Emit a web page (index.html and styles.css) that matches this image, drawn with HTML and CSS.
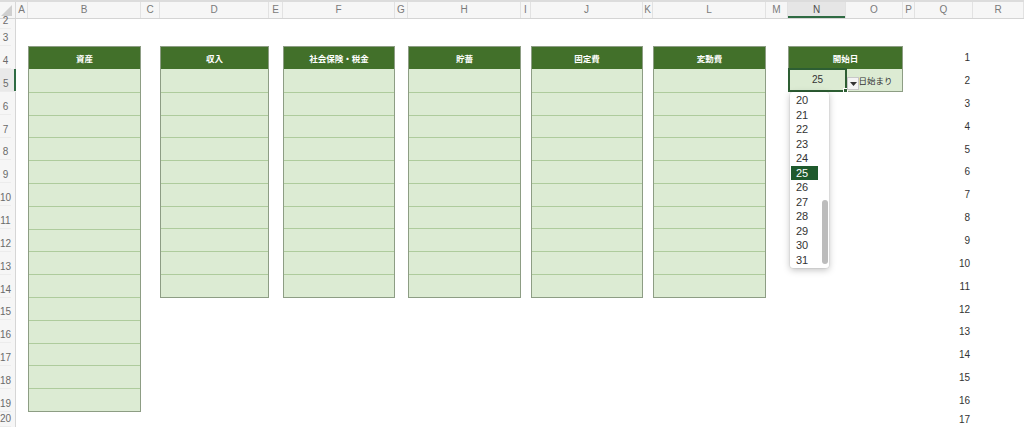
FILE: index.html
```html
<!DOCTYPE html>
<html lang="ja">
<head>
<meta charset="utf-8">
<title>Sheet</title>
<link rel="stylesheet" href="styles.css">
</head>
<body>
<div class="app">
  <div class="colhdr">
    <div class="corner"><svg width="12" height="13" viewBox="0 0 12 13"><polygon points="11,1 11,12 0,12" fill="#cfcfcf"/></svg></div>
    <div class="ch">A</div><div class="ch">B</div><div class="ch">C</div><div class="ch">D</div><div class="ch">E</div><div class="ch">F</div><div class="ch">G</div><div class="ch">H</div><div class="ch">I</div><div class="ch">J</div><div class="ch">K</div><div class="ch">L</div><div class="ch">M</div><div class="ch ch-sel">N</div><div class="ch">O</div><div class="ch">P</div><div class="ch">Q</div><div class="ch">R</div>
  </div>
  <div class="main">
    <div class="rowhdr">
      <div class="rh">2</div><div class="rh">3</div><div class="rh">4</div><div class="rh rh-sel">5</div><div class="rh">6</div><div class="rh">7</div><div class="rh">8</div><div class="rh">9</div><div class="rh">10</div><div class="rh">11</div><div class="rh">12</div><div class="rh">13</div><div class="rh">14</div><div class="rh">15</div><div class="rh">16</div><div class="rh">17</div><div class="rh">18</div><div class="rh">19</div><div class="rh">20</div>
    </div>
    <div class="sheet">
      <section class="tbl tbl-long col-b">
        <div class="th">資産</div>
        <div class="td"></div><div class="td"></div><div class="td"></div><div class="td"></div><div class="td"></div><div class="td"></div><div class="td"></div><div class="td"></div><div class="td"></div><div class="td"></div><div class="td"></div><div class="td"></div><div class="td"></div><div class="td"></div><div class="td"></div>
      </section>
      <section class="tbl tbl-short col-d">
        <div class="th">収入</div>
        <div class="td"></div><div class="td"></div><div class="td"></div><div class="td"></div><div class="td"></div><div class="td"></div><div class="td"></div><div class="td"></div><div class="td"></div><div class="td"></div>
      </section>
      <section class="tbl tbl-short col-f">
        <div class="th">社会保険・税金</div>
        <div class="td"></div><div class="td"></div><div class="td"></div><div class="td"></div><div class="td"></div><div class="td"></div><div class="td"></div><div class="td"></div><div class="td"></div><div class="td"></div>
      </section>
      <section class="tbl tbl-short col-h">
        <div class="th">貯蓄</div>
        <div class="td"></div><div class="td"></div><div class="td"></div><div class="td"></div><div class="td"></div><div class="td"></div><div class="td"></div><div class="td"></div><div class="td"></div><div class="td"></div>
      </section>
      <section class="tbl tbl-short col-j">
        <div class="th">固定費</div>
        <div class="td"></div><div class="td"></div><div class="td"></div><div class="td"></div><div class="td"></div><div class="td"></div><div class="td"></div><div class="td"></div><div class="td"></div><div class="td"></div>
      </section>
      <section class="tbl tbl-short col-l">
        <div class="th">変動費</div>
        <div class="td"></div><div class="td"></div><div class="td"></div><div class="td"></div><div class="td"></div><div class="td"></div><div class="td"></div><div class="td"></div><div class="td"></div><div class="td"></div>
      </section>
      <section class="start">
        <div class="th th-span">開始日</div>
        <div class="sc sc-sel">25
          <span class="handle"></span>
          <span class="ddbtn"><svg width="7" height="4" viewBox="0 0 7 4"><polygon points="0,0 7,0 3.5,4" fill="#333"/></svg></span>
          <div class="dropdown">
            <ul class="items">
              <li>20</li><li>21</li><li>22</li><li>23</li><li>24</li><li class="on">25</li><li>26</li><li>27</li><li>28</li><li>29</li><li>30</li><li>31</li>
            </ul>
            <div class="track"><div class="thumb"></div></div>
          </div>
        </div>
        <div class="sc sc-text">日始まり</div>
      </section>
      <div class="qnums">
        <span>1</span><span>2</span><span>3</span><span>4</span><span>5</span><span>6</span><span>7</span><span>8</span><span>9</span><span>10</span><span>11</span><span>12</span><span>13</span><span>14</span><span>15</span><span>16</span><span>17</span>
      </div>
    </div>
  </div>
</div>
</body>
</html>
```

FILE: styles.css
```css
* { box-sizing: border-box; margin: 0; padding: 0; }
html, body { width: 1024px; height: 427px; overflow: hidden; background: #fff; }
body { font-family: "Liberation Sans", Arial, "Noto Sans CJK JP", sans-serif; color: #333; }

.app { width: 1024px; height: 427px; display: flex; flex-direction: column; }

.colhdr {
  display: grid;
  grid-template-columns: 16px 12px 113px 19px 109px 14px 112px 13px 113px 10px 112px 10px 113px 22px 58px 57px 12px 58px 1fr;
  height: 19px;
  background: #f6f6f6;
  border-top: 2px solid #dcdcdc;
  border-bottom: 1px solid #d4d4d4;
}
.corner { display: flex; align-items: flex-end; justify-content: flex-end; padding: 0 2px 1px 0; border-right: 1px solid #d8d8d8; }
.corner svg { display: block; }
.ch {
  font-size: 10px; color: #7a7a7a; text-align: center; line-height: 16px;
  border-right: 1px solid #e2e2e2;
  overflow: hidden;
}
.ch-sel { background: #e6e6e6; box-shadow: inset 0 -2px 0 #2f6b43; color: #4d4d4d; }

.main { flex: 1; display: flex; min-height: 0; }

.rowhdr {
  width: 16px;
  display: grid;
  grid-template-rows: 10px 17px 23px repeat(15, 22.87px) 1fr;
  background: #f6f6f6;
  border-right: 1px solid #d6d6d6;
}
.rh {
  font-size: 10px; color: #6a6a6a; width: 11px; text-align: center;
  display: flex; align-items: flex-end; justify-content: center;
  padding-bottom: 2px; line-height: 11px;
  border-bottom: 1px solid #ececec;
}
.rh-sel { width: 16px; justify-content: flex-start; padding-left: 3px; box-shadow: inset -2px 0 0 #2f6b43; background: #e9e9e9; }

.sheet {
  flex: 1;
  display: grid;
  grid-template-columns: 12px 113px 19px 109px 14px 112px 13px 113px 10px 112px 10px 113px 22px 58px 57px 12px 58px 1fr;
  grid-template-rows: 10px 17px 23px repeat(15, 22.87px) 1fr;
  background: #fff;
}

.tbl {
  display: grid;
  border: 1px solid #8d9d84;
  background: #dcebd3;
}
.tbl-long { grid-row: 3 / 19; grid-template-rows: 22px repeat(15, 1fr); }
.tbl-short { grid-row: 3 / 14; grid-template-rows: 22px repeat(10, 1fr); }
.col-b { grid-column: 2; }
.col-d { grid-column: 4; }
.col-f { grid-column: 6; }
.col-h { grid-column: 8; }
.col-j { grid-column: 10; }
.col-l { grid-column: 12; }

.th {
  background: #42702a;
  color: #fff;
  font-family: "Noto Sans CJK JP", sans-serif;
  font-weight: 700;
  font-size: 8.5px;
  display: flex; align-items: center; justify-content: center;
}
.td { border-top: 1px solid #aecb9c; }
.tbl .th + .td { border-top: 0; }

.start {
  grid-column: 14 / 16;
  grid-row: 3 / 5;
  display: grid;
  grid-template-columns: 58px 1fr;
  grid-template-rows: 22px 1fr;
  border: 1px solid #8d9d84;
  background: #dcebd3;
}
.th-span { grid-column: 1 / 3; }
.sc {
  font-size: 10px; color: #333;
  display: flex; align-items: center; justify-content: center;
}
.sc-sel {
  position: relative;
  margin: -1px 0 -1px -1px;
  border: 2px solid #2d5e33;
}
.sc-text { font-family: "Noto Sans CJK JP", sans-serif; font-size: 8.5px; padding-left: 2px; }

.handle {
  position: absolute; right: -3px; bottom: -3px;
  width: 5px; height: 5px; background: #2d5e33; border: 1px solid #fff;
}
.ddbtn {
  position: absolute; left: 57px; top: 7px;
  width: 12px; height: 13px;
  background: #f4f4f4; border: 1px solid #c8c8c8;
  display: flex; align-items: center; justify-content: center;
  z-index: 2;
}
.ddbtn svg { display: block; }

.dropdown {
  position: absolute; left: 0px; top: 22px;
  width: 39px; height: 176px;
  background: #fff;
  border-radius: 3px;
  box-shadow: 0 2px 7px rgba(0,0,0,0.25), 0 0 0 0.5px rgba(0,0,0,0.08);
  display: flex;
  padding: 1px 0 0 1px;
  z-index: 3;
}
.items { list-style: none; width: 27px; }
.items li {
  height: 14.5px; line-height: 14.5px;
  font-size: 11px; color: #333; padding-left: 5px;
}
.items li.on { background: #1f5a2d; color: #fff; }
.track { flex: 1; position: relative; }
.thumb {
  position: absolute; left: 4px; top: 107px;
  width: 6px; height: 64px; border-radius: 3px; background: #bcbcbc;
}

.qnums {
  grid-column: 17;
  grid-row: 3 / 20;
  display: grid;
  grid-template-rows: 23px repeat(15, 22.87px) 1fr;
}
.qnums span {
  font-size: 10px; color: #333;
  display: flex; align-items: center; justify-content: flex-end;
  padding-right: 3px;
}
```
